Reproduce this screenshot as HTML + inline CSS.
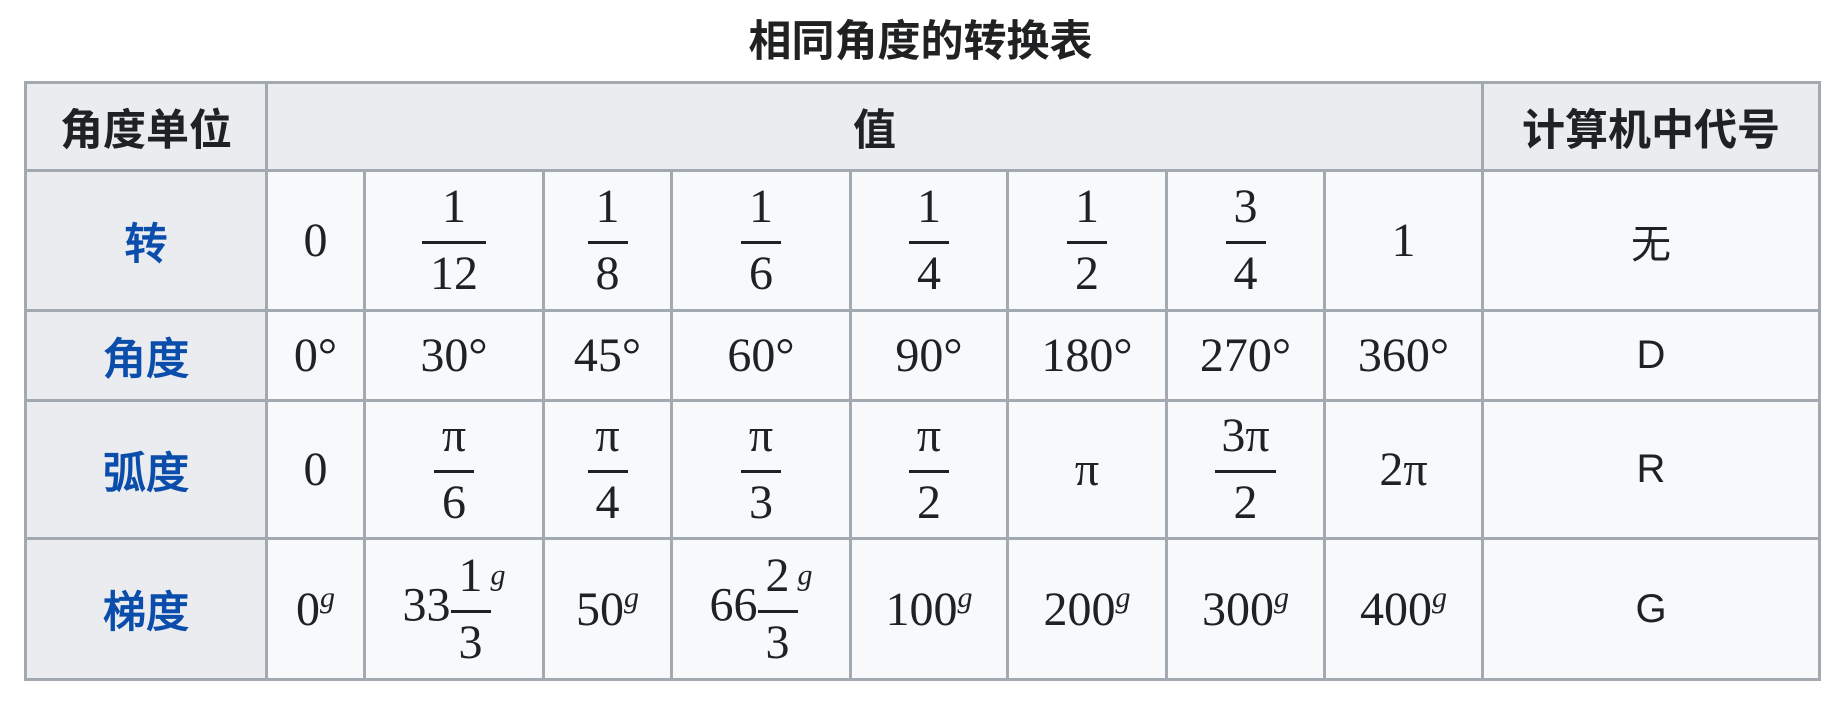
<!DOCTYPE html>
<html><head><meta charset="utf-8"><style>
body{margin:0;background:#fff;width:1842px;height:702px;overflow:hidden;font-family:"Liberation Sans","Noto Sans CJK SC",sans-serif;color:#202122}
.title{position:absolute;left:20px;width:1801px;top:17px;text-align:center;font-weight:bold;font-size:43px;line-height:50px}
table{position:absolute;left:24px;top:81px;border-collapse:collapse;table-layout:fixed;width:1797px}
td,th{border:3px solid #a2a9b1;background:#f8f9fa;text-align:center;vertical-align:middle;padding:0}
th{background:#eaecf0;font-size:43px;font-weight:bold}
th.l{color:#0b4dab}
.m{font-family:"Liberation Serif","DejaVu Serif",serif;font-size:48px}
.f{display:inline-flex;flex-direction:column;align-items:center;vertical-align:middle;line-height:1}
.f .n{padding:0 6px 10px}
.f .d{border-top:3px solid #202122;padding:6px 8px 0;width:100%;box-sizing:border-box}
sup{font-style:italic;font-size:30px;vertical-align:18px;line-height:0}
.s{font-size:40px}
</style></head><body>
<div class="title">相同角度的转换表</div>
<table>
<colgroup><col style="width:241px"><col style="width:98px"><col style="width:179px"><col style="width:128px"><col style="width:179px"><col style="width:157px"><col style="width:159px"><col style="width:158px"><col style="width:158px"><col style="width:337px"></colgroup>
<tr style="height:88px"><th>角度单位</th><th colspan="8">值</th><th>计算机中代号</th></tr>
<tr style="height:140px" class="m"><th class="l">转</th><td>0</td><td><span class="f"><span class="n">1</span><span class="d">12</span></span></td><td><span class="f"><span class="n">1</span><span class="d">8</span></span></td><td><span class="f"><span class="n">1</span><span class="d">6</span></span></td><td><span class="f"><span class="n">1</span><span class="d">4</span></span></td><td><span class="f"><span class="n">1</span><span class="d">2</span></span></td><td><span class="f"><span class="n">3</span><span class="d">4</span></span></td><td>1</td><td class="s" style="font-family:'Liberation Sans','Noto Sans CJK SC',sans-serif">无</td></tr>
<tr style="height:90px" class="m"><th class="l">角度</th><td>0°</td><td>30°</td><td>45°</td><td>60°</td><td>90°</td><td>180°</td><td>270°</td><td>360°</td><td class="s" style="font-family:'Liberation Sans',sans-serif">D</td></tr>
<tr style="height:138px" class="m"><th class="l">弧度</th><td>0</td><td><span class="f"><span class="n">π</span><span class="d">6</span></span></td><td><span class="f"><span class="n">π</span><span class="d">4</span></span></td><td><span class="f"><span class="n">π</span><span class="d">3</span></span></td><td><span class="f"><span class="n">π</span><span class="d">2</span></span></td><td>π</td><td><span class="f"><span class="n">3π</span><span class="d">2</span></span></td><td>2π</td><td class="s" style="font-family:'Liberation Sans',sans-serif">R</td></tr>
<tr style="height:141px" class="m"><th class="l">梯度</th><td>0<sup>g</sup></td><td>33<span class="f"><span class="n">1</span><span class="d">3</span></span><sup style="vertical-align:36px">g</sup></td><td>50<sup>g</sup></td><td>66<span class="f"><span class="n">2</span><span class="d">3</span></span><sup style="vertical-align:36px">g</sup></td><td>100<sup>g</sup></td><td>200<sup>g</sup></td><td>300<sup>g</sup></td><td>400<sup>g</sup></td><td class="s" style="font-family:'Liberation Sans',sans-serif">G</td></tr>
</table>
</body></html>
